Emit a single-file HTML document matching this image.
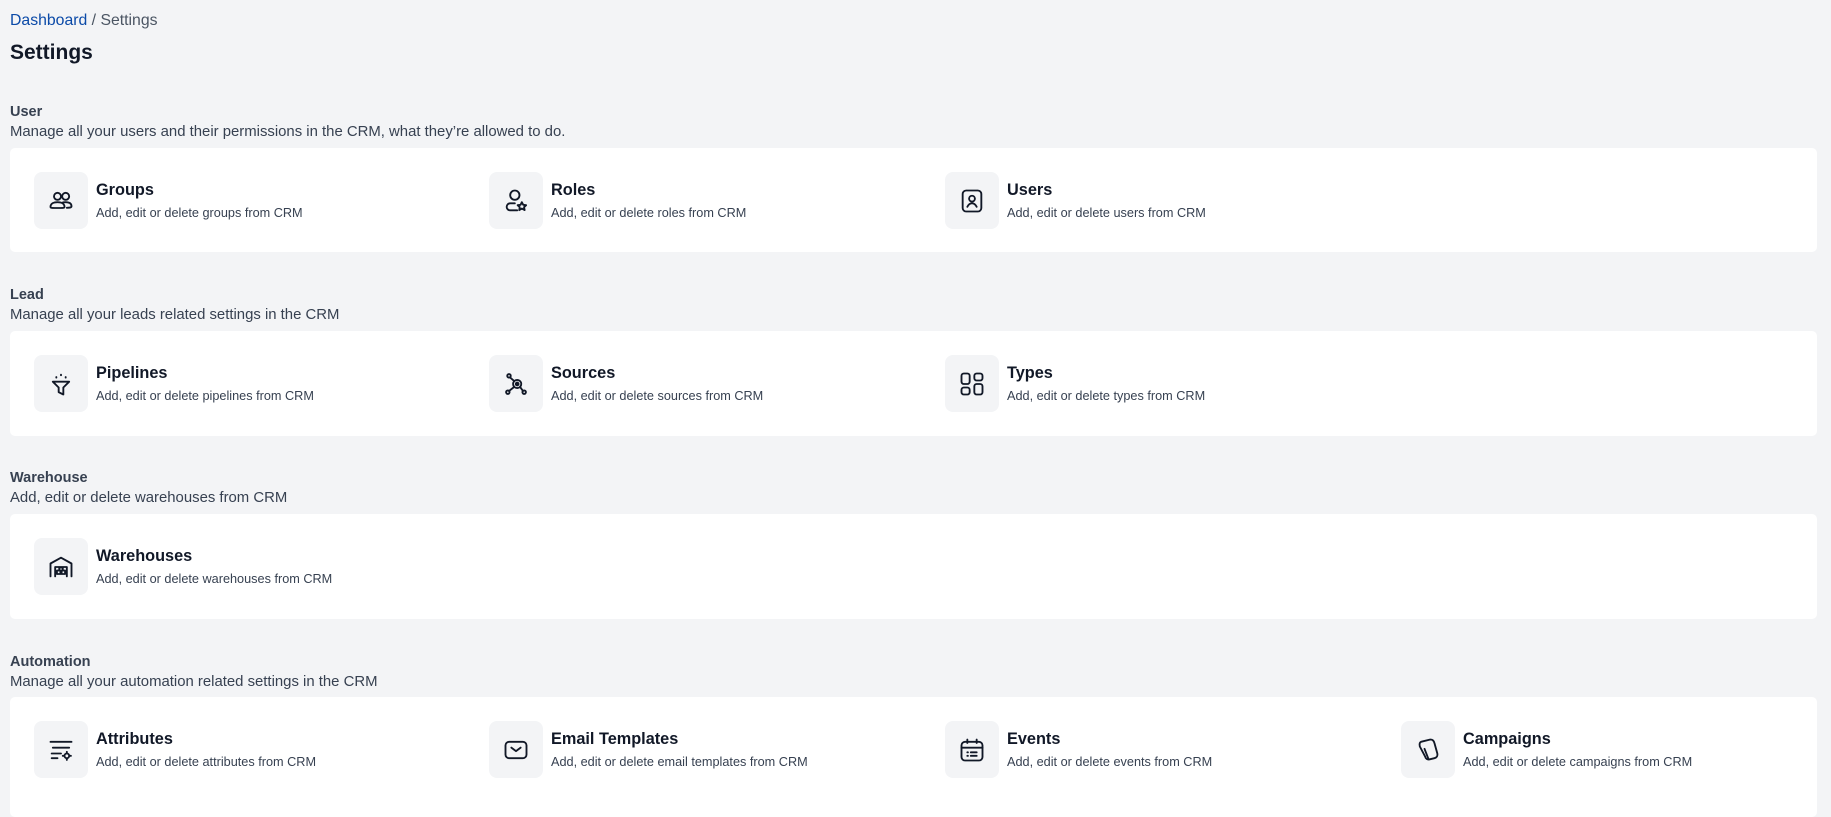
<!DOCTYPE html>
<html><head><meta charset="utf-8"><style>
*{margin:0;padding:0;box-sizing:border-box}
body{width:1831px;height:810px;background:#f3f4f6;font-family:"Liberation Sans",Arial,sans-serif;color:#111827;position:relative;overflow:hidden}
.a{position:absolute;white-space:nowrap}
.crumb{left:10px;top:12px;font-size:15.8px;color:#4b5563}
.crumb span{color:#0b4aa8}
.h1{left:10px;top:41px;font-size:21px;font-weight:bold}
.lbl{left:10px;font-size:14.5px;font-weight:bold;color:#374151}
.desc{left:10px;font-size:14.9px;color:#374151}
.card{left:10px;width:1807px;background:#fff;border-radius:5px}
.ib{width:54px;height:57px;background:#f3f4f6;border-radius:8px;display:flex;align-items:center;justify-content:center}
.ib svg{width:28px;height:28px;fill:none;stroke:#111827;stroke-width:1.6;stroke-linecap:round;stroke-linejoin:round}
.t{font-size:16.3px;font-weight:bold;color:#111827}
.s{font-size:12.7px;color:#374151}
</style></head><body>
<div class="a crumb"><span>Dashboard</span> / Settings</div>
<div class="a h1">Settings</div>

<div class="a lbl" style="top:104px">User</div>
<div class="a desc" style="top:124px">Manage all your users and their permissions in the CRM, what they’re allowed to do.</div>
<div class="a card" style="top:148px;height:104px"></div>

<div class="a lbl" style="top:287px">Lead</div>
<div class="a desc" style="top:307px">Manage all your leads related settings in the CRM</div>
<div class="a card" style="top:331px;height:105px"></div>

<div class="a lbl" style="top:470px">Warehouse</div>
<div class="a desc" style="top:490px">Add, edit or delete warehouses from CRM</div>
<div class="a card" style="top:514px;height:105px"></div>

<div class="a lbl" style="top:654px">Automation</div>
<div class="a desc" style="top:674px">Manage all your automation related settings in the CRM</div>
<div class="a card" style="top:697px;height:120px"></div>

<div class="a ib" style="left:34px;top:172px"><svg viewBox="0 0 24 24"><circle cx="9" cy="8" r="3"/><circle cx="16" cy="8" r="3"/><path d="M3 17c0-3 3-4 6-4s6 1 6 4c0 1-1 1-6 1s-6 0-6-1z"/><path d="M13 13.5c1-.5 2-.5 3-.5 3 0 5 1 5 3.5 0 1-1 1.3-4 1.3"/></svg></div>
<div class="a t" style="left:96px;top:181px">Groups</div><div class="a s" style="left:96px;top:206px">Add, edit or delete groups from CRM</div>

<div class="a ib" style="left:489px;top:172px"><svg viewBox="0 0 24 24"><circle cx="11" cy="7" r="4"/><path d="M13 20H7a3 3 0 0 1 0-6h4"/><path d="M17 13l1.2 2.3 2.5.3-1.8 1.7.5 2.5-2.4-1.3-2.2 1.3.4-2.5-1.8-1.7 2.5-.3z"/></svg></div>
<div class="a t" style="left:551px;top:181px">Roles</div><div class="a s" style="left:551px;top:206px">Add, edit or delete roles from CRM</div>

<div class="a ib" style="left:945px;top:172px"><svg viewBox="0 0 24 24"><rect x="4" y="3" width="16" height="18" rx="3"/><circle cx="12" cy="10" r="2.5"/><path d="M8 17c1-2 2.5-3 4-3s3 1 4 3"/></svg></div>
<div class="a t" style="left:1007px;top:181px">Users</div><div class="a s" style="left:1007px;top:206px">Add, edit or delete users from CRM</div>

<div class="a ib" style="left:34px;top:355px"><svg viewBox="0 0 24 24"><path d="M5 10h14l-5 5v6l-4-2v-4z"/><path d="M8 6v.5M12 4v.5M16 6v.5"/></svg></div>
<div class="a t" style="left:96px;top:364px">Pipelines</div><div class="a s" style="left:96px;top:389px">Add, edit or delete pipelines from CRM</div>

<div class="a ib" style="left:489px;top:355px"><svg viewBox="0 0 24 24"><circle cx="13" cy="12" r="3.5"/><circle cx="13" cy="12" r="1.2" fill="#111827"/><circle cx="6" cy="5" r="1.5"/><circle cx="5" cy="19" r="1.5"/><circle cx="19" cy="19" r="1.5"/><path d="M7 6.5l3.5 3M6 18l4.5-3.5M15.5 14.5l2.5 3.5"/></svg></div>
<div class="a t" style="left:551px;top:364px">Sources</div><div class="a s" style="left:551px;top:389px">Add, edit or delete sources from CRM</div>

<div class="a ib" style="left:945px;top:355px"><svg viewBox="0 0 24 24"><rect x="3" y="3" width="7" height="9" rx="2"/><rect x="14" y="3" width="7" height="6" rx="2"/><rect x="3" y="15" width="7" height="6" rx="2"/><rect x="14" y="12" width="7" height="9" rx="2"/></svg></div>
<div class="a t" style="left:1007px;top:364px">Types</div><div class="a s" style="left:1007px;top:389px">Add, edit or delete types from CRM</div>

<div class="a ib" style="left:34px;top:538px"><svg viewBox="0 0 24 24"><path d="M3 20V9l9-5 9 5v11"/><path d="M7 20v-8h10v8"/><rect x="8.5" y="15" width="3" height="3"/><rect x="12.5" y="15" width="3" height="3"/><rect x="10.5" y="12.5" width="3" height="2.5"/></svg></div>
<div class="a t" style="left:96px;top:547px">Warehouses</div><div class="a s" style="left:96px;top:572px">Add, edit or delete warehouses from CRM</div>

<div class="a ib" style="left:34px;top:721px"><svg viewBox="0 0 24 24"><path d="M3 5h18M5 10h14M4 15h8M4 19h5"/><circle cx="17" cy="17" r="2"/><path d="M17 13.5v1M17 19.5v1M13.5 17h1M19.5 17h1"/></svg></div>
<div class="a t" style="left:96px;top:730px">Attributes</div><div class="a s" style="left:96px;top:755px">Add, edit or delete attributes from CRM</div>

<div class="a ib" style="left:489px;top:721px"><svg viewBox="0 0 24 24"><rect x="3" y="5" width="18" height="14" rx="3"/><path d="M8 10l4 3 4-3"/></svg></div>
<div class="a t" style="left:551px;top:730px">Email Templates</div><div class="a s" style="left:551px;top:755px">Add, edit or delete email templates from CRM</div>

<div class="a ib" style="left:945px;top:721px"><svg viewBox="0 0 24 24"><rect x="3" y="5" width="18" height="16" rx="3"/><path d="M3 10h18M8 3v3M16 3v3M8 14h.5M11 14h5M8 17h.5M11 17h5"/></svg></div>
<div class="a t" style="left:1007px;top:730px">Events</div><div class="a s" style="left:1007px;top:755px">Add, edit or delete events from CRM</div>

<div class="a ib" style="left:1401px;top:721px"><svg viewBox="0 0 24 24"><path d="M6 5l8-2c2 0 3 1 3.5 3l2.5 9c.5 2-.5 3.5-2.5 4l-4 1c-2 .5-3.5-.5-4-2.5L5 9c-.5-2 0-3.5 1-4z"/><path d="M9 11l3.5 9"/></svg></div>
<div class="a t" style="left:1463px;top:730px">Campaigns</div><div class="a s" style="left:1463px;top:755px">Add, edit or delete campaigns from CRM</div>
</body></html>
